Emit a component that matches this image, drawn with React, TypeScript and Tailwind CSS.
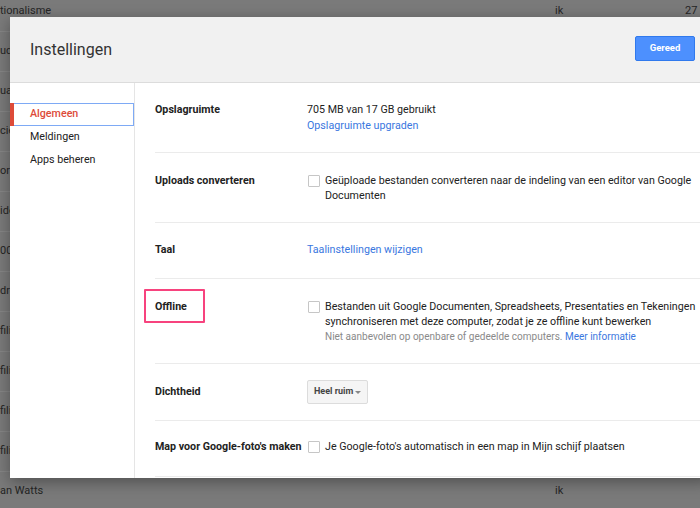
import React from "react";

const bgRows: { left: string; mid?: string; right?: string }[] = [
  { left: "tionalisme", mid: "ik", right: "27" },
  { left: "udrey" },
  { left: "uari" },
  { left: "cie" },
  { left: "ord" },
  { left: "idee" },
  { left: "0001" },
  { left: "dres" },
  { left: "filiaal" },
  { left: "filiaal" },
  { left: "filiaal" },
  { left: "filiaal" },
  { left: "an Watts", mid: "ik" },
  { left: "" },
];

function Checkbox() {
  return (
    <div className="w-3 h-3 mt-[2px] ml-px shrink-0 border border-[#c6c6c6] rounded-[1px] bg-white" />
  );
}

export default function App() {
  return (
    <div className="relative w-[700px] h-[508px] overflow-hidden bg-[#7a7a7a] font-['Roboto',sans-serif] text-[10.7px]">
      {/* background list (dimmed) */}
      <div className="flex flex-col -mt-2">
        {bgRows.map((r, i) => (
          <div
            key={i}
            className="h-10 shrink-0 border-b border-[#858585] grid grid-cols-[555px_130px_1fr] items-center text-[11px] text-[#252525]"
          >
            <span className="whitespace-nowrap">{r.left}</span>
            <span>{r.mid ?? ""}</span>
            <span>{r.right ?? ""}</span>
          </div>
        ))}
      </div>

      {/* dialog */}
      <div className="absolute left-[10px] top-[17px] w-[700px] h-[461px] bg-white shadow-[0_4px_14px_rgba(0,0,0,0.35)] flex flex-col">
        <div className="h-[66px] shrink-0 bg-[#f1f1f1] border-b border-[#dcdcdc] flex items-center justify-between pl-5 pr-[15px]">
          <div className="text-[16px] text-[#333] font-normal">Instellingen</div>
          <button className="w-[60px] h-[25px] mb-[2px] bg-[#4d90fe] border border-[#3079ed] rounded-[2px] text-white text-[9.5px] font-bold">
            Gereed
          </button>
        </div>

        <div className="flex flex-1 min-h-0">
          {/* left nav */}
          <div className="w-[125px] shrink-0 border-r border-[#e5e5e5] pt-5 flex flex-col text-[10.7px] text-[#222]">
            <div className="relative h-[23px] border border-[#7eaaf5] flex items-center pl-[19px] text-[#dd4b39] font-medium">
              <div className="absolute -left-px -top-px -bottom-px w-[4px] bg-[#dd4b39]" />
              Algemeen
            </div>
            <div className="h-[23px] flex items-center pl-5">Meldingen</div>
            <div className="h-[23px] flex items-center pl-5">Apps beheren</div>
          </div>

          {/* content */}
          <div className="flex-1 pl-5 text-[10.7px] text-[#222]">
            {/* Opslagruimte */}
            <div className="flex border-b border-[#ebebeb] pt-[19px] pb-[18px] leading-4">
              <div className="w-[152px] shrink-0 font-bold">Opslagruimte</div>
              <div className="flex flex-col">
                <span>705 MB van 17 GB gebruikt</span>
                <span className="text-[#3a77e0]">Opslagruimte upgraden</span>
              </div>
            </div>

            {/* Uploads converteren */}
            <div className="flex border-b border-[#ebebeb] pt-5 pb-[19px] leading-[15px]">
              <div className="w-[152px] shrink-0 font-bold">Uploads converteren</div>
              <div className="flex gap-[5px]">
                <Checkbox />
                <div className="flex flex-col whitespace-nowrap">
                  <span>Geüploade bestanden converteren naar de indeling van een editor van Google</span>
                  <span>Documenten</span>
                </div>
              </div>
            </div>

            {/* Taal */}
            <div className="flex border-b border-[#ebebeb] pt-[19px] pb-5 leading-4">
              <div className="w-[152px] shrink-0 font-bold">Taal</div>
              <span className="text-[#3a77e0]">Taalinstellingen wijzigen</span>
            </div>

            {/* Offline */}
            <div className="flex border-b border-[#ebebeb] pt-5 pb-[19px] leading-[15px]">
              <div className="relative w-[152px] shrink-0 font-bold">
                Offline
                <div className="absolute -left-[11px] -top-[10px] w-[61px] h-[34px] border-2 border-[#f7437e] rounded-[1px]" />
              </div>
              <div className="flex gap-[5px]">
                <Checkbox />
                <div className="flex flex-col whitespace-nowrap">
                  <span>Bestanden uit Google Documenten, Spreadsheets, Presentaties en Tekeningen</span>
                  <span>synchroniseren met deze computer, zodat je ze offline kunt bewerken</span>
                  <span className="text-[10px] text-[#8a8a8a]">
                    Niet aanbevolen op openbare of gedeelde computers.{" "}
                    <span className="text-[#3a77e0]">Meer informatie</span>
                  </span>
                </div>
              </div>
            </div>

            {/* Dichtheid */}
            <div className="flex items-center border-b border-[#ebebeb] py-4">
              <div className="w-[152px] shrink-0 font-bold">Dichtheid</div>
              <div className="h-[24px] w-[61px] flex items-center justify-between pl-[6px] pr-[6px] bg-[#f5f5f5] border border-[#dcdcdc] rounded-[2px] text-[9px] font-bold text-[#444] whitespace-nowrap">
                <span>Heel ruim</span>
                <svg width="6" height="3" viewBox="0 0 6 3">
                  <path d="M0 0 L6 0 L3 3 Z" fill="#888888" />
                </svg>
              </div>
            </div>

            {/* Map voor Google-foto's maken */}
            <div className="flex border-b border-[#ebebeb] pt-[18px] pb-[21px] leading-4">
              <div className="w-[152px] shrink-0 font-bold whitespace-nowrap">Map voor Google-foto's maken</div>
              <div className="flex gap-[5px]">
                <Checkbox />
                <span className="whitespace-nowrap">Je Google-foto's automatisch in een map in Mijn schijf plaatsen</span>
              </div>
            </div>
          </div>
        </div>
      </div>
    </div>
  );
}
